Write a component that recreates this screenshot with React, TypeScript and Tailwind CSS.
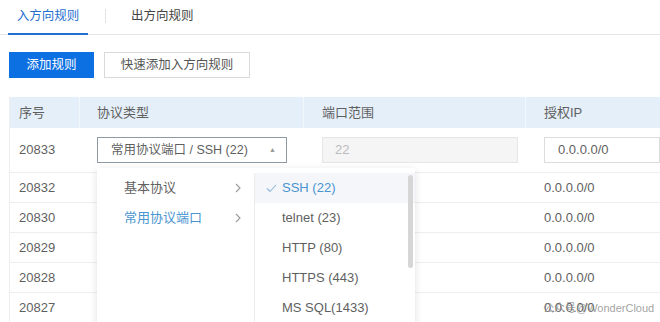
import React from "react";

const rows = ["20832", "20830", "20829", "20828", "20827"];
const ports = ["SSH (22)", "telnet (23)", "HTTP (80)", "HTTPS (443)", "MS SQL(1433)"];

const font = { fontFamily: '"Liberation Sans", "Noto Sans CJK SC", sans-serif' };

const Chevron = () => (
  <svg width="8" height="10" viewBox="0 0 8 10" fill="none" stroke="#9a9a9a" strokeWidth="1.1">
    <path d="M2 1l4 4-4 4" />
  </svg>
);

export default function App() {
  return (
    <div className="relative w-[660px] h-[322px] overflow-hidden bg-white text-[#5f5f5f]" style={font}>
      {/* Tabs */}
      <div className="flex items-end h-[35px] border-b border-[#e6e6e6] pl-[8px]">
        <div className="w-[80px] h-[35px] flex items-center justify-center text-[12.5px] text-[#1f6fd0] border-b-2 border-[#1f6fd0] -mb-px">
          入方向规则
        </div>
        <div className="w-px h-[14px] bg-[#e3e3e3] mb-[11px] ml-[17px]" />
        <div className="h-[35px] flex items-center text-[12.5px] text-[#444] ml-[25px]">出方向规则</div>
      </div>

      {/* Buttons */}
      <div className="flex gap-[10px] pl-[9px] pt-[17px]">
        <button className="w-[85px] h-[26px] bg-[#0c6fe2] text-white text-[12.5px]">添加规则</button>
        <button className="w-[146px] h-[26px] border border-[#dadada] bg-white text-[#555] text-[12.5px]">
          快速添加入方向规则
        </button>
      </div>

      {/* Table */}
      <div className="ml-[9px] mt-[19px] border-l border-[#eeeeee]">
        <div className="flex h-[31px] bg-[#e5eff9] text-[13px] text-[#5f5f5f] items-center">
          <div className="w-[70px] pl-[9px] h-full flex items-center border-r border-[#f2f7fc]">序号</div>
          <div className="w-[224px] pl-[17px] h-full flex items-center border-r border-[#f2f7fc]">协议类型</div>
          <div className="w-[222px] pl-[18px] h-full flex items-center border-r border-[#f2f7fc]">端口范围</div>
          <div className="flex-1 pl-[18px] h-full flex items-center">授权IP</div>
        </div>
        <div className="flex h-[45px] items-center border-b border-[#eeeeee] text-[13px]">
          <div className="w-[70px] pl-[9px]">20833</div>
          <div className="w-[224px] pl-[17px]">
            <div className="w-[190px] h-[26px] border border-[#8e9aa6] flex items-center pl-[13px] pr-[10px] text-[12.5px] text-[#5f5f5f]">
              <span className="flex-1">常用协议端口 / SSH (22)</span>
              <span className="text-[7px] text-[#999]">▲</span>
            </div>
          </div>
          <div className="w-[222px] pl-[18px]">
            <div className="w-[196px] h-[26px] border border-[#e6e6e6] bg-[#f5f5f5] flex items-center pl-[12px] text-[#bbb]">22</div>
          </div>
          <div className="flex-1 pl-[18px]">
            <div className="h-[26px] border border-[#dcdcdc] flex items-center pl-[13px] text-[#5f5f5f]">0.0.0.0/0</div>
          </div>
        </div>
        {rows.map((r) => (
          <div key={r} className="flex h-[30px] items-center border-b border-[#eeeeee] text-[13px]">
            <div className="w-[70px] pl-[9px]">{r}</div>
            <div className="w-[224px]" />
            <div className="w-[222px]" />
            <div className="flex-1 pl-[18px]">0.0.0.0/0</div>
          </div>
        ))}
      </div>

      {/* Cascader dropdown */}
      <div className="absolute left-[97px] top-[168px] w-[318px] h-[170px] bg-white flex shadow-[0_2px_8px_rgba(0,0,0,0.12)] pt-[5px] text-[13px]">
        <div className="w-[158px] border-r border-[#ececec]">
          <div className="h-[30px] flex items-center pl-[27px] pr-[12px] text-[#5f5f5f]">
            <span className="flex-1">基本协议</span>
            <Chevron />
          </div>
          <div className="h-[30px] flex items-center pl-[27px] pr-[12px] text-[#4a94d0]">
            <span className="flex-1">常用协议端口</span>
            <Chevron />
          </div>
        </div>
        <div className="relative flex-1">
          {ports.map((p, i) => (
            <div
              key={p}
              className={
                i === 0
                  ? "h-[30px] flex items-center pl-[11px] bg-[#f4f6fa] text-[#4a94d0]"
                  : "h-[30px] flex items-center pl-[27px] text-[#5f5f5f]"
              }
            >
              {i === 0 && (
                <svg width="11" height="9" viewBox="0 0 11 9" fill="none" stroke="#8fb8dc" strokeWidth="1.1" className="mr-[5px]">
                  <path d="M1 4.5l3 3 6-6.5" />
                </svg>
              )}
              {p}
            </div>
          ))}
          <div className="absolute right-[2px] top-[2px] w-[5px] h-[93px] rounded bg-[#d6d6d6]" />
        </div>
      </div>

      {/* Watermark */}
      <div className="absolute left-[543px] top-[300px] whitespace-nowrap text-[11px] text-[#8a8a8a]/80">
        公众号@WonderCloud
      </div>
    </div>
  );
}
